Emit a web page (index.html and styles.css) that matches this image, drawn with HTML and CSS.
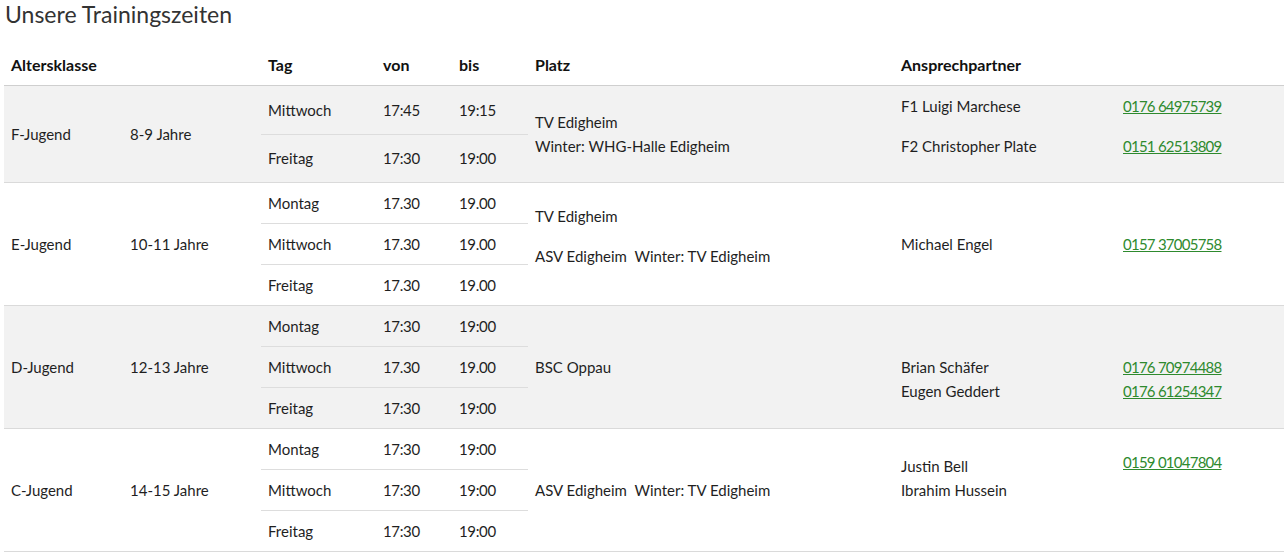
FILE: index.html
```html
<!DOCTYPE html>
<html lang="de">
<head>
<meta charset="utf-8">
<title>Unsere Trainingszeiten</title>
<link rel="stylesheet" href="styles.css">
</head>
<body>
<div class="page">
  <h2 class="title">Unsere Trainingszeiten</h2>
  <table class="times">
    <colgroup>
      <col class="c-klasse"><col class="c-alter"><col class="c-tag"><col class="c-von"><col class="c-bis"><col class="c-platz"><col class="c-name"><col class="c-tel">
    </colgroup>
    <thead>
      <tr>
        <th colspan="2">Altersklasse</th>
        <th>Tag</th>
        <th>von</th>
        <th>bis</th>
        <th>Platz</th>
        <th colspan="2">Ansprechpartner</th>
      </tr>
    </thead>
    <tbody class="grp alt">
      <tr>
        <td rowspan="2">F-Jugend</td>
        <td rowspan="2">8-9 Jahre</td>
        <td class="sub">Mittwoch</td>
        <td class="sub num">17:45</td>
        <td class="sub num">19:15</td>
        <td rowspan="2">TV Edigheim<br>Winter: WHG-Halle Edigheim</td>
        <td rowspan="2"><p>F1 Luigi Marchese</p><p>F2 Christopher Plate</p></td>
        <td rowspan="2"><p><a href="#">0176 64975739</a></p><p><a href="#">0151 62513809</a></p></td>
      </tr>
      <tr>
        <td>Freitag</td>
        <td class="num">17:30</td>
        <td class="num">19:00</td>
      </tr>
    </tbody>
    <tbody class="grp">
      <tr>
        <td rowspan="3">E-Jugend</td>
        <td rowspan="3">10-11 Jahre</td>
        <td class="sub">Montag</td>
        <td class="sub num">17.30</td>
        <td class="sub num">19.00</td>
        <td rowspan="3"><p>TV Edigheim</p><p>ASV Edigheim&nbsp; Winter: TV Edigheim</p></td>
        <td rowspan="3">Michael Engel</td>
        <td rowspan="3"><a href="#">0157 37005758</a></td>
      </tr>
      <tr>
        <td class="sub">Mittwoch</td>
        <td class="sub num">17.30</td>
        <td class="sub num">19.00</td>
      </tr>
      <tr>
        <td>Freitag</td>
        <td class="num">17.30</td>
        <td class="num">19.00</td>
      </tr>
    </tbody>
    <tbody class="grp alt">
      <tr>
        <td rowspan="3">D-Jugend</td>
        <td rowspan="3">12-13 Jahre</td>
        <td class="sub">Montag</td>
        <td class="sub num">17:30</td>
        <td class="sub num">19:00</td>
        <td rowspan="3">BSC Oppau</td>
        <td rowspan="3"><br>Brian Schäfer<br>Eugen Geddert</td>
        <td rowspan="3"><br><a href="#">0176 70974488</a><br><a href="#">0176 61254347</a></td>
      </tr>
      <tr>
        <td class="sub">Mittwoch</td>
        <td class="sub num">17.30</td>
        <td class="sub num">19.00</td>
      </tr>
      <tr>
        <td>Freitag</td>
        <td class="num">17:30</td>
        <td class="num">19:00</td>
      </tr>
    </tbody>
    <tbody class="grp">
      <tr>
        <td rowspan="3">C-Jugend</td>
        <td rowspan="3">14-15 Jahre</td>
        <td class="sub">Montag</td>
        <td class="sub num">17:30</td>
        <td class="sub num">19:00</td>
        <td rowspan="3">ASV Edigheim&nbsp; Winter: TV Edigheim</td>
        <td rowspan="3">Justin Bell<br>Ibrahim Hussein<br><br></td>
        <td rowspan="3"><p><a href="#">0159 01047804</a></p><p>&nbsp;</p></td>
      </tr>
      <tr>
        <td class="sub">Mittwoch</td>
        <td class="sub num">17:30</td>
        <td class="sub num">19:00</td>
      </tr>
      <tr>
        <td>Freitag</td>
        <td class="num">17:30</td>
        <td class="num">19:00</td>
      </tr>
    </tbody>
  </table>
</div>
</body>
</html>
```
FILE: styles.css
```css
html, body {
  margin: 0;
  padding: 0;
  background: #ffffff;
}
body {
  font-family: Lato, "Liberation Sans", sans-serif;
  font-size: 15px;
  color: #1f1f1f;
}
.page {
  padding: 0 0 0 4px;
}
.title {
  margin: 0 0 17px 0;
  padding-left: 1px;
  font-size: 23px;
  line-height: 28px;
  font-weight: 400;
  color: #333333;
}
.times {
  width: 1280px;
  table-layout: fixed;
  border-collapse: collapse;
  border-spacing: 0;
}
.c-klasse { width: 119px; }
.c-alter { width: 138px; }
.c-tag { width: 115px; }
.c-von { width: 76px; }
.c-bis { width: 76px; }
.c-platz { width: 366px; }
.c-name { width: 222px; }
.c-tel { width: 168px; }
.times th,
.times td {
  padding: 8px 7px;
  line-height: 24px;
  text-align: left;
  vertical-align: middle;
}
.times th {
  font-size: 16px;
  font-weight: 700;
  color: #111111;
  border-bottom: 1px solid #cfcfcf;
}
.grp td {
  border-bottom: 1px solid #dadada;
}
.grp td.sub {
  border-bottom: 1px solid #dddddd;
}
.grp tr:last-child td {
  border-bottom: 1px solid #dadada;
}
.grp.alt td {
  background: #f2f2f2;
}
.times td.num {
  letter-spacing: -0.35px;
}
.times p {
  margin: 0 0 16px 0;
}
.times a {
  color: #2e8a2e;
  text-decoration: underline;
  letter-spacing: -0.75px;
}
```
